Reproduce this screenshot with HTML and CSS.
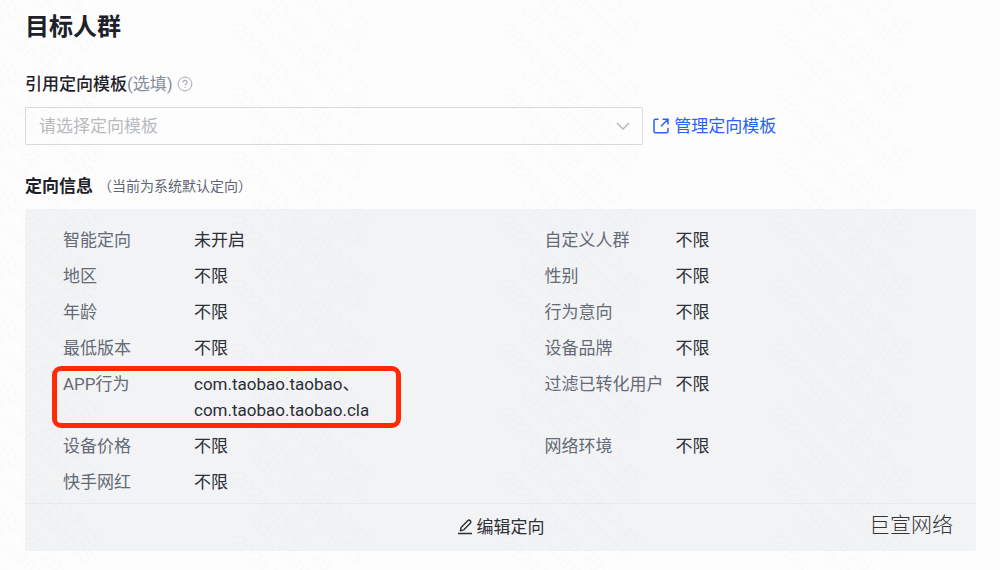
FILE: index.html
```html
<!DOCTYPE html>
<html lang="zh-CN">
<head>
  <meta charset="UTF-8" />
  <meta name="viewport" content="width=device-width, initial-scale=1.0"/>
  <title>目标人群</title>
  <link rel="stylesheet" href="styles.css">
</head>

<body>
  <main class="container">
    <h1>目标人群</h1>

    <!-- Template -->
    <div class="field-label">
      <label for="template">引用定向模板<span class="optional">(选填)</span></label>
      <svg class="help-icon" width="16" height="16" viewBox="0 0 16 16" fill="none" stroke="currentColor" aria-hidden="true">
        <circle cx="8" cy="8" r="6.9"/>
        <path d="M5.900 6.500a2.100 2.100 0 1 1 3 1.800c-.7.3-.9.6-.9 1.300M8 10.900v1.200" stroke-width="1.2"/>
      </svg>
    </div>
    <div class="template-row">
      <div class="select-box">
        <select id="template">
          <option>请选择定向模板</option>
        </select>
        <svg class="arrow" width="14" height="8" viewBox="0 0 14 8" fill="none" stroke="currentColor" stroke-width="1.6" aria-hidden="true">
          <path d="M1 1l6 6 6-6"/>
        </svg>
      </div>
      <a href="#" class="manage-link">
        <svg width="16" height="16" viewBox="0 0 16 16" fill="none" stroke="currentColor" stroke-width="1.5" aria-hidden="true">
          <path d="M5.500 1.200H2.500A1.500 1.500 0 0 0 1 2.700v10.600a1.500 1.500 0 0 0 1.500 1.500h11a1.500 1.500 0 0 0 1.500-1.500V9.800M9.500 1.200H15v5.300M15 1.200L8 8.200"/>
        </svg>
        管理定向模板
      </a>
    </div>

    <!-- Targeting info -->
    <div class="info-title">
      <h2>定向信息</h2>
      <span class="note">（当前为系统默认定向）</span>
    </div>
    <section class="panel">
      <dl class="info-grid">
        <div class="item"><dt>智能定向</dt><dd>未开启</dd></div>
        <div class="item"><dt>自定义人群</dt><dd>不限</dd></div>
        <div class="item"><dt>地区</dt><dd>不限</dd></div>
        <div class="item"><dt>性别</dt><dd>不限</dd></div>
        <div class="item"><dt>年龄</dt><dd>不限</dd></div>
        <div class="item"><dt>行为意向</dt><dd>不限</dd></div>
        <div class="item"><dt>最低版本</dt><dd>不限</dd></div>
        <div class="item"><dt>设备品牌</dt><dd>不限</dd></div>
        <div class="item marked"><dt>APP行为</dt><dd>com.taobao.taobao、<br>com.taobao.taobao.cla</dd></div>
        <div class="item"><dt>过滤已转化用户</dt><dd>不限</dd></div>
        <div class="item"><dt>设备价格</dt><dd>不限</dd></div>
        <div class="item"><dt>网络环境</dt><dd>不限</dd></div>
        <div class="item"><dt>快手网红</dt><dd>不限</dd></div>
      </dl>
      <div class="panel-footer">
        <button type="button" class="edit-button">
          <svg width="16" height="16" viewBox="0 0 16 16" fill="none" stroke="currentColor" stroke-width="1.4" stroke-linejoin="round" aria-hidden="true">
            <path d="M3.400 11.700l.7-3.300L10.700 1.700a1.700 1.700 0 0 1 2.500 2.500L6.600 10.900zM1 14.500h14"/>
          </svg>
          编辑定向
        </button>
        <span class="brand">巨宣网络</span>
      </div>
    </section>
  </main>

  <!-- Watermark: each stamp is taller than its tile, so it is drawn once per tile it crosses -->
  <svg class="watermark" aria-hidden="true">
    <defs>
      <g id="stamp">
        <text transform="translate(31 11) rotate(45)">wb_wanghong05 -</text>
        <text transform="translate(12 31) rotate(45)">2024/05/28 20:17:45</text>
      </g>
      <pattern id="mark" x="218" width="270" height="64" patternUnits="userSpaceOnUse">
        <use href="#stamp" y="-192"/>
        <use href="#stamp" y="-128"/>
        <use href="#stamp" y="-64"/>
        <use href="#stamp"/>
        <use href="#stamp" y="64"/>
      </pattern>
    </defs>
    <rect width="100%" height="100%" fill="url(#mark)"/>
  </svg>
</body>
</html>
```
FILE: styles.css
```css
* {
  margin: 0;
  padding: 0;
  box-sizing: border-box;
}

body {
  font-family: Roboto, 'Noto Sans CJK SC', sans-serif;
  font-size: 17px;
  line-height: 26px;
  background-color: #fdfdfd;
  color: #2b2f36;
}

.container {
  padding: 9px 24px 20px 25px;
}

h1 {
  font-size: 24px;
  line-height: 36px;
  font-weight: 700;
  color: #1d2129;
}

.field-label {
  display: flex;
  align-items: center;
  gap: 4px;
  margin-top: 26px;
  font-weight: 500;
  color: #1d2129;
}

.optional {
  font-weight: 400;
  color: #868e9b;
}

.help-icon {
  color: #a5abb5;
}

.template-row {
  display: flex;
  align-items: center;
  gap: 10px;
  margin-top: 10px;
}

.select-box {
  position: relative;
  width: 65%;
}

.select-box select {
  display: block;
  width: 100%;
  height: 38px;
  padding: 0 40px 0 13px;
  appearance: none;
  border: 1px solid #d9dadc;
  border-radius: 1px;
  background-color: transparent;
  font: inherit;
  color: #b9bbbe;
}

.select-box .arrow {
  position: absolute;
  top: 15px;
  right: 13px;
  color: #b9bbbe;
  pointer-events: none;
}

.manage-link {
  display: flex;
  align-items: center;
  gap: 5px;
  color: #2a62f5;
  text-decoration: none;
}

.info-title {
  display: flex;
  align-items: center;
  gap: 5px;
  margin-top: 28px;
}

h2 {
  font-size: 17px;
  line-height: 26px;
  font-weight: 700;
  color: #1d2129;
}

.note {
  font-size: 14px;
  color: #5f6672;
}

.panel {
  margin-top: 10px;
  border-radius: 2px;
  background-color: #f2f3f5;
}

.info-grid {
  display: grid;
  grid-template-columns: 1fr 1fr;
  row-gap: 10px;
  column-gap: 50px;
  padding: 18px 0 8px 38px;
}

.item {
  position: relative;
  display: flex;
}

.item dt {
  width: 131px;
  color: #646b76;
}

/* red frame round the highlighted row */
.marked::before {
  content: '';
  box-sizing: border-box;
  position: absolute;
  inset: -5px auto -5px -11px;
  width: 349px;
  border: 5px solid #ff2a05;
  border-radius: 9px;
}

.panel-footer {
  position: relative;
  display: flex;
  justify-content: center;
  padding: 10px 0 11px;
  border-top: 1px solid #e8e9ec;
}

.edit-button {
  display: flex;
  align-items: center;
  gap: 4px;
  border: none;
  background: none;
  font: inherit;
  color: #2b2f36;
  cursor: pointer;
}

.brand {
  position: absolute;
  right: 23px;
  top: 8px;
  font-size: 21px;
  font-weight: 300;
  color: #333;
}

.watermark {
  position: fixed;
  inset: 0;
  width: 100%;
  height: 100%;
  font-size: 20px;
  fill: #000;
  opacity: 0.013;
  pointer-events: none;
}
```
